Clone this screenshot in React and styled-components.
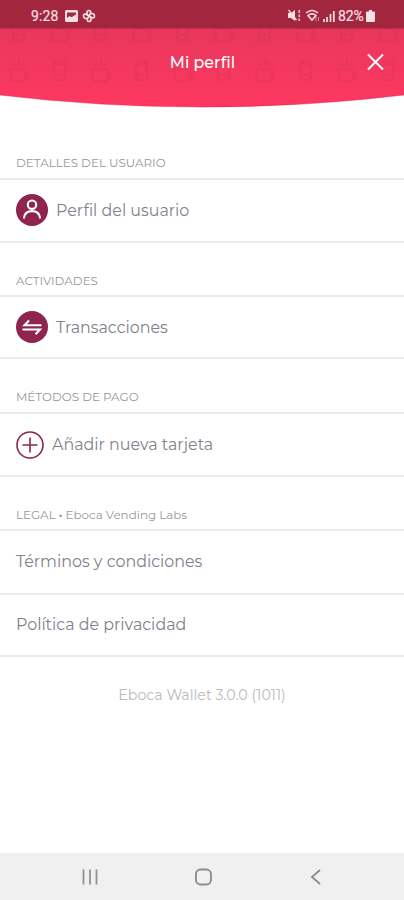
import React from "react";
import styled, { createGlobalStyle } from "styled-components";

const Global = createGlobalStyle`
  * { box-sizing: border-box; }
  body { margin: 0; background: #fff; }
`;

const Screen = styled.div`
  width: 404px;
  height: 900px;
  display: flex;
  flex-direction: column;
  overflow: hidden;
  background: #fff;
  font-family: "Montserrat", "Inter", sans-serif;
`;

const Hero = styled.header`
  display: grid;
  height: 108px;
  flex: none;
  & > * { grid-area: 1 / 1; }
`;

const HeroArt = styled.svg`
  display: block;
  width: 404px;
  height: 108px;
`;

const HeroContent = styled.div`
  z-index: 1;
`;

const StatusBar = styled.div`
  height: 28px;
  padding: 3px 29px 0 31px;
  display: flex;
  align-items: center;
  justify-content: space-between;
  color: #f7dfe4;
  font: 400 14px/20px "Roboto", sans-serif;
`;

const StatusGroup = styled.div`
  display: flex;
  align-items: center;
  height: 24px;
`;

const StatusText = styled.span`
  width: ${(p) => p.$w}px;
  margin-left: ${(p) => p.$ml || 0}px;
  letter-spacing: ${(p) => p.$ls || 0}px;
  white-space: nowrap;
  -webkit-text-stroke: 0.2px #f7dfe4;
`;

const StatusIcon = styled.svg`
  display: block;
  flex: none;
  margin-left: ${(p) => p.$ml || 0}px;
`;

const TitleBar = styled.div`
  height: 68px;
  display: grid;
  grid-template-columns: 56px 1fr 56px;
  align-items: center;
  color: #fff;
`;

const Title = styled.h1`
  grid-column: 2;
  margin: 0;
  padding: 1px 0 0 1px;
  text-align: center;
  font-size: 15.8px;
  line-height: 20px;
  font-weight: 500;
`;

const CloseButton = styled.button`
  border: 0;
  padding: 0 1px 0 0;
  background: none;
  display: flex;
  justify-content: center;
  color: #fff;
`;

const Content = styled.main`
  flex: 1;
`;

const SectionLabel = styled.h2`
  margin: 0;
  height: ${(p) => p.$h}px;
  padding: 0 16px ${(p) => p.$pb || 7}px;
  display: flex;
  align-items: flex-end;
  border-bottom: 2px solid #ebebec;
  color: #97979b;
  font-size: 11.9px;
  line-height: 15px;
  font-weight: 400;
  white-space: pre;
`;

const Dot = styled.span`
  font-weight: 700;
`;

const Row = styled.div`
  height: ${(p) => p.$h}px;
  padding: 0 16px ${(p) => p.$lift || 0}px;
  display: flex;
  align-items: center;
  gap: 8px;
  border-bottom: 2px solid #ebebec;
`;

const RowText = styled.span`
  padding-top: ${(p) => p.$drop || 0}px;
  color: #81818c;
  font-size: 15.9px;
  line-height: 20px;
  font-weight: 400;
  white-space: nowrap;
`;

const Version = styled.p`
  margin: 29px 0 0;
  text-align: center;
  color: #b9b9bc;
  font-size: 14.2px;
  line-height: 18px;
`;

const NavBar = styled.nav`
  height: 47px;
  flex: none;
  background: #f0f0f0;
  display: flex;
  align-items: center;
  justify-content: space-between;
  padding: 1px 82px 0 81px;
`;

const Cup = () => (
  <>
    <path d="M-8 -1H8L7 11H-7Z M8 2h2v6h-3" />
    <path d="M-4 -4v-5M1 -4v-8M5 -4v-4" />
  </>
);
const Can = () => (
  <>
    <rect x="-5" y="-9" width="11" height="19" rx="3" />
    <path d="M-3 -6h7M-2 5h5" />
  </>
);

const patternRows = [
  { y: 30, shift: 1 },
  { y: 70, shift: 0 },
  { y: 113, shift: 1 },
];

const Pattern = () => (
  <g fill="none" stroke="#7d2c55" strokeOpacity="0.08" strokeWidth="2.2">
    {patternRows.map((r) =>
      Array.from({ length: 10 }, (_, i) => (
        <g key={`${r.y}-${i}`} transform={`translate(${18 + i * 41} ${r.y})`}>
          {(i + r.shift) % 2 ? <Can /> : <Cup />}
        </g>
      ))
    )}
  </g>
);

const UserIcon = () => (
  <svg width="32" height="32" viewBox="0 0 32 32">
    <circle cx="16" cy="16" r="16" fill="#8f244e" />
    <g fill="none" stroke="#fff" strokeWidth="2.1" strokeLinecap="round">
      <circle cx="16" cy="10.700" r="4.2" />
      <path d="M8 23.700c.5-4.500 3.500-6.600 8-6.600s7.500 2.100 8 6.600" />
    </g>
  </svg>
);

const TransferIcon = () => (
  <svg width="32" height="32" viewBox="0 0 32 32">
    <circle cx="16" cy="16" r="16" fill="#8f244e" />
    <path d="M13 9.500L8.500 14.300H25.500M6.500 18.500H24L19.500 23.300" fill="none" stroke="#fff" strokeWidth="2.100" />
  </svg>
);

const AddIcon = () => (
  <svg width="28" height="28" viewBox="0 0 28 28">
    <g fill="none" stroke="#8f244e" strokeWidth="1.600">
      <circle cx="14" cy="14" r="13" />
      <path d="M14 6.500v15M6.500 14h15" />
    </g>
  </svg>
);

export default function App() {
  return (
    <>
      <Global />
      <Screen>
        <Hero>
          <HeroArt viewBox="0 0 404 108">
            <defs>
              <linearGradient id="heroFill" x1="0" y1="0" x2="0" y2="1">
                <stop offset="0.25" stopColor="#e8375c" />
                <stop offset="1" stopColor="#ff3860" />
              </linearGradient>
              <clipPath id="heroClip">
                <path d="M0 0H404V95Q202 119 0 95Z" />
              </clipPath>
            </defs>
            <g clipPath="url(#heroClip)">
              <rect width="404" height="108" fill="url(#heroFill)" />
              <Pattern />
              <rect width="404" height="28.500" fill="#a3263f" />
            </g>
            <path d="M0 95Q202 119 404 95" fill="none" stroke="#e8194d" strokeOpacity="0.5" />
          </HeroArt>
          <HeroContent>
            <StatusBar>
              <StatusGroup>
                <StatusText $w={28} $ls={0.1}>9:28</StatusText>
                <StatusIcon $ml={6} width="13" height="12" viewBox="0 0 13 12">
                  <path fillRule="evenodd" fill="#f7dfe4" d="M1.500 0h10Q13 0 13 1.500v9Q13 12 11.500 12h-10Q0 12 0 10.500v-9Q0 0 1.500 0ZM2 2.500v5.500l2.500-2 2 1.300L11 4.500V2.500Z" />
                </StatusIcon>
                <StatusIcon $ml={4} width="14" height="14" viewBox="0 0 14 14">
                  <g fill="none" stroke="#f7dfe4" strokeWidth="1.600">
                    <path d="M7 7C4 6 4.500 1.500 7 1.500S9 4 7 7ZM7 7c1-3.500 5.500-3 5.500 0S10 9 7 7ZM7 7c3 1 2.500 5.500 0 5.500S5 10 7 7ZM7 7c-1 3.500-5.500 3-5.500 0S4 5 7 7Z" />
                  </g>
                </StatusIcon>
              </StatusGroup>
              <StatusGroup>
                <StatusIcon width="13" height="13" viewBox="0 0 13 13">
                  <path d="M0 4h3l4-3v11L3 9H0Z" fill="#f7dfe4" />
                  <path d="M0.500 1l8 10M11.200 1v3M11.200 5.500v2.500M11.200 9.500v2.500" fill="none" stroke="#f7dfe4" strokeWidth="1.300" />
                </StatusIcon>
                <StatusIcon $ml={4} width="15" height="13" viewBox="0 0 15 13">
                  <path d="M1 4Q7 -1 13 4M3 6.500Q7 3 11 6.500L7 11Z" fill="none" stroke="#f7dfe4" strokeWidth="1.600" />
                  <path d="M11 8v4M13.500 8v4" stroke="#f7dfe4" strokeOpacity=".5" />
                </StatusIcon>
                <StatusIcon $ml={3} width="12" height="12" viewBox="0 0 12 12">
                  <path d="M1 9v3M4 7v5M7.500 4v8M10.800 1v11" stroke="#f7dfe4" strokeWidth="1.700" />
                </StatusIcon>
                <StatusText $ml={3} $w={28} $ls={-0.1}>82%</StatusText>
                <StatusIcon width="9" height="12" viewBox="0 0 9 12">
                  <path d="M3 0h3v1.500h2q1 0 1 1V11q0 1-1 1H1q-1 0-1-1V2.500q0-1 1-1h2Z" fill="#f7dfe4" />
                </StatusIcon>
              </StatusGroup>
            </StatusBar>
            <TitleBar>
              <Title>Mi perfil</Title>
              <CloseButton aria-label="Cerrar">
                <svg width="18" height="18" viewBox="0 0 18 18">
                  <path d="M1 1.500L16 16.500M16 1.500L1 16.500" stroke="#fff" strokeWidth="2" />
                </svg>
              </CloseButton>
            </TitleBar>
          </HeroContent>
        </Hero>
        <Content>
          <SectionLabel $h={72} $pb={8}>DETALLES DEL USUARIO</SectionLabel>
          <Row $h={63} $lift={1}><UserIcon /><RowText $drop={2}>Perfil del usuario</RowText></Row>
          <SectionLabel $h={54}>ACTIVIDADES</SectionLabel>
          <Row $h={62}><TransferIcon /><RowText $drop={2}>Transacciones</RowText></Row>
          <SectionLabel $h={55} $pb={8}>MÉTODOS DE PAGO</SectionLabel>
          <Row $h={63}><AddIcon /><RowText>Añadir nueva tarjeta</RowText></Row>
          <SectionLabel $h={54}>LEGAL <Dot>·</Dot> Eboca Vending Labs</SectionLabel>
          <Row $h={64}><RowText>Términos y condiciones</RowText></Row>
          <Row $h={62}><RowText>Política de privacidad</RowText></Row>
          <Version>Eboca Wallet 3.0.0 (1011)</Version>
        </Content>
        <NavBar>
          <svg width="18" height="16" viewBox="0 0 18 16">
            <path d="M2.500 0.500v15M9 0.500v15M15.500 0.500v15" stroke="#929292" strokeWidth="1.800" />
          </svg>
          <svg width="18" height="18" viewBox="0 0 18 18">
            <rect x="0.950" y="1.500" width="15" height="15" rx="4.500" fill="none" stroke="#8c8c8c" strokeWidth="1.900" />
          </svg>
          <svg width="14" height="16" viewBox="0 0 14 16">
            <path d="M12 1L4 8l8 7" fill="none" stroke="#8c8c8c" strokeWidth="1.800" />
          </svg>
        </NavBar>
      </Screen>
    </>
  );
}
